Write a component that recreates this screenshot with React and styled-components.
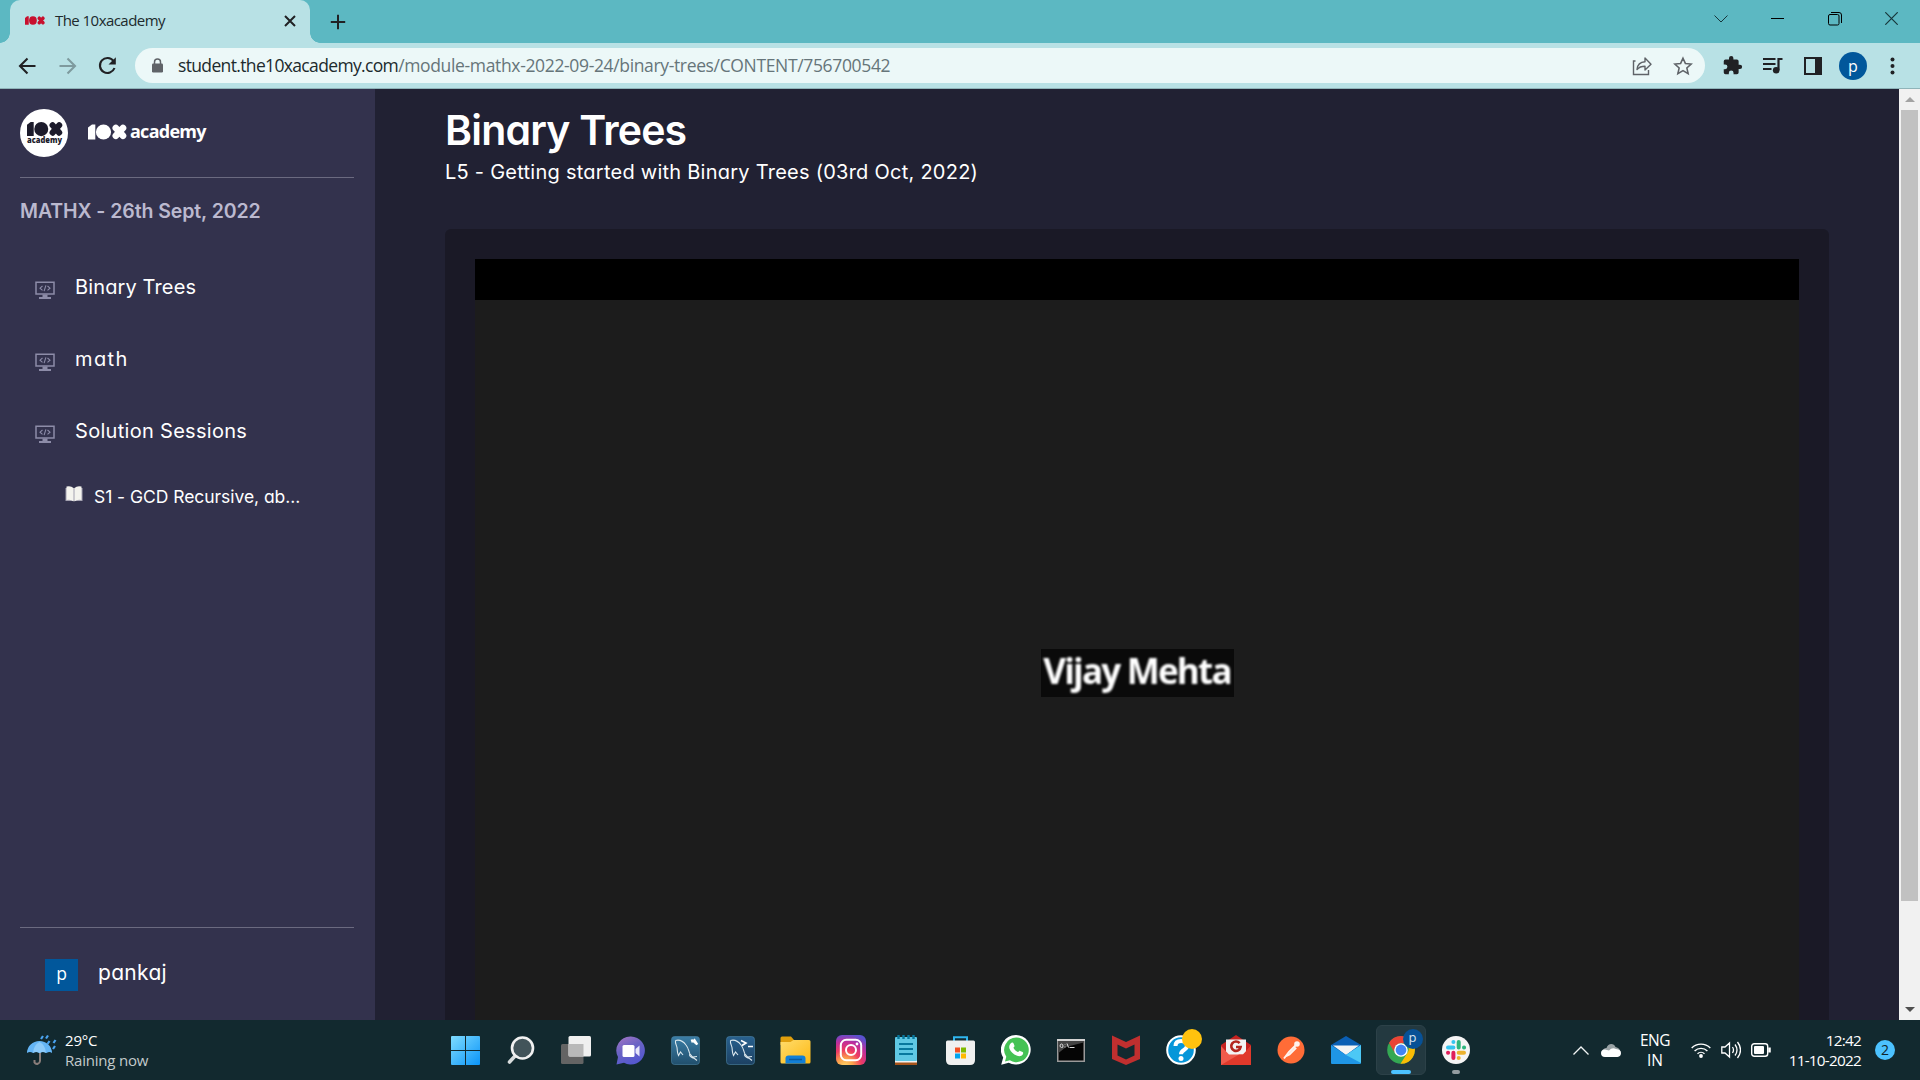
import React from "react";
import styled, { createGlobalStyle } from "styled-components";

const ui = `"Open Sans", "Noto Sans", sans-serif`;
const geo = `Inter, "Open Sans", sans-serif`;

const Global = createGlobalStyle`
  * { box-sizing: border-box; }
  body { margin: 0; overflow: hidden; background: #212133; }
  svg { flex: none; }
`;

const Screen = styled.div`
  width: 1920px;
  height: 1080px;
  display: flex;
  flex-direction: column;
  overflow: hidden;
`;

const Label = styled.span`
  display: block;
  white-space: nowrap;
  font-family: ${(p) => (p.$geo ? geo : ui)};
  font-feature-settings: ${(p) => (p.$geo ? '"cv11"' : "normal")};
  font-size: ${(p) => p.$size}px;
  line-height: ${(p) => p.$line || 24}px;
  font-weight: ${(p) => p.$weight || 400};
  letter-spacing: ${(p) => p.$track || 0}px;
  color: ${(p) => p.$color || "#fff"};
`;

/* ---------- browser chrome ---------- */
const TabStrip = styled.div`
  flex: none;
  height: 43px;
  background: #5cb8c2;
  display: flex;
  padding-left: 10px;
`;
const Tab = styled.div`
  width: 300px;
  height: 43px;
  background: #b8e1e5;
  border-radius: 10px 10px 0 0;
  display: flex;
  align-items: center;
  padding: 0 12px 2px 15px;
  position: relative;
  &::before, &::after {
    content: "";
    position: absolute;
    bottom: 0;
    width: 10px;
    height: 10px;
  }
  &::before {
    left: -10px;
    background: radial-gradient(circle at 0 0, transparent 9.5px, #b8e1e5 10px);
  }
  &::after {
    right: -10px;
    background: radial-gradient(circle at 100% 0, transparent 9.5px, #b8e1e5 10px);
  }
`;
const TabTitle = styled(Label)`
  margin: -2px 0 0 10px;
  flex: 1;
`;
const NewTab = styled.div`
  width: 55px;
  display: flex;
  align-items: center;
  justify-content: center;
`;
const WindowButtons = styled.div`
  margin-left: auto;
  display: flex;
  height: 37px;
  align-items: center;
`;
const WindowButton = styled.div`
  width: 57px;
  display: flex;
  justify-content: center;
`;
const Toolbar = styled.div`
  flex: none;
  height: 46px;
  background: #b8e1e5;
  border-bottom: 1px solid #8fb4b9;
  display: flex;
  align-items: center;
`;
const NavButtons = styled.div`
  width: 135px;
  padding-left: 17px;
  display: flex;
  gap: 20px;
`;
const AddressBar = styled.div`
  width: 1570px;
  height: 35px;
  border-radius: 18px;
  background: #ecf8f8;
  display: flex;
  align-items: center;
  padding: 0 11px 0 16px;
`;
const Url = styled(Label)`
  flex: 1;
  margin-left: 14px;
  margin-top: -1px;
  b { font-weight: 400; color: #202a2d; letter-spacing: -0.65px; }
`;
const BarIcons = styled.div`
  display: flex;
  gap: 17px;
`;
const Extensions = styled.div`
  display: flex;
  align-items: center;
  padding-left: 17px;
`;
const ExtensionSlot = styled.div`
  width: ${(p) => p.$w || 40}px;
  display: flex;
  justify-content: center;
`;
const Profile = styled.div`
  width: 28px;
  height: 28px;
  border-radius: 50%;
  background: #01579b;
  display: flex;
  align-items: center;
  justify-content: center;
`;

/* ---------- page ---------- */
const Page = styled.div`
  flex: none;
  height: 931px;
  display: flex;
  overflow: hidden;
`;
const Sidebar = styled.aside`
  width: 375px;
  height: 931px;
  background: #33324d;
  padding: 20px 21px 0 20px;
  display: flex;
  flex-direction: column;
`;
const Brand = styled.div`
  height: 68px;
  display: flex;
  align-items: flex-start;
`;
const Wordmark = styled.div`
  margin: 10px 0 0 19px;
  display: flex;
  align-items: flex-start;
  gap: 3px;
  svg { margin-top: 5px; }
`;
const Rule = styled.hr`
  width: 334px;
  height: 1px;
  border: 0;
  margin: 0;
  flex: none;
  background: #6b6a80;
`;
const Course = styled(Label)`
  margin-top: 19px;
`;
const Modules = styled.nav`
  margin-top: 47px;
  flex: 1;
`;
const ModuleRow = styled.div`
  height: 72px;
  display: flex;
  align-items: flex-start;
  padding-left: 15px;
  gap: 20px;
  svg { margin-top: 9px; }
`;
const LessonRow = styled.div`
  display: flex;
  margin-top: -3px;
  padding-left: 45px;
  gap: 11px;
  svg { margin-top: 1px; }
`;
const User = styled.div`
  height: 92px;
  display: flex;
  padding: 31px 0 0 25px;
  gap: 20px;
`;
const UserBadge = styled.div`
  width: 33px;
  height: 32px;
  background: #01579b;
  display: flex;
  justify-content: center;
`;
const Main = styled.main`
  width: 1524px;
  background: #212133;
  padding: 16px 70px 0;
`;
const Title = styled(Label).attrs({ as: "h1" })`
  margin: 0;
`;
const Subtitle = styled(Label)`
  margin-top: 2px;
`;
const Player = styled.section`
  margin-top: 42px;
  height: 900px;
  border-radius: 6px 6px 0 0;
  background: #1a1926;
  padding: 30px 30px 0;
`;
const Video = styled.div`
  height: 870px;
  border-top: 41px solid #000;
  background: #1c1c1c;
  display: flex;
  justify-content: center;
  align-items: flex-start;
  padding-top: 349px;
`;
const Speaker = styled.div`
  width: 193px;
  height: 48px;
  background: #0a0a0a;
  display: flex;
  justify-content: center;
`;
const SpeakerName = styled(Label)`
  filter: blur(0.8px);
`;
const Scrollbar = styled.div`
  width: 21px;
  background: #f1f1f1;
  display: flex;
  flex-direction: column;
  align-items: center;
  justify-content: space-between;
`;
const Arrow = styled.div`
  height: 21px;
  display: flex;
  align-items: center;
`;
const Thumb = styled.div`
  width: 17px;
  height: 791px;
  margin-bottom: auto;
  background: #c1c1c1;
`;

/* ---------- taskbar ---------- */
const Taskbar = styled.footer`
  flex: none;
  height: 60px;
  background: #12292f;
  display: flex;
`;
const Weather = styled.div`
  width: 438px;
  padding: 9px 0 0 26px;
  display: flex;
  gap: 8px;
  svg { margin-top: 5px; }
`;
const Apps = styled.div`
  display: flex;
  align-items: center;
  flex: 1;
`;
const AppSlot = styled.div`
  width: 55.04px;
  height: 60px;
  flex: none;
  display: flex;
  align-items: center;
  justify-content: center;
  position: relative;
`;
const ActiveTile = styled.div`
  width: 50px;
  height: 50px;
  border-radius: 6px;
  background: #233940;
  border: 1px solid #2c4148;
  display: flex;
  align-items: center;
  justify-content: center;
`;
const Running = styled.i`
  position: absolute;
  bottom: 6px;
  width: ${(p) => p.$w}px;
  height: 4px;
  border-radius: 2px;
  background: ${(p) => p.$c};
`;
const AppBadge = styled.div`
  position: absolute;
  top: 9px;
  right: 6px;
  width: 20px;
  height: 20px;
  border-radius: 50%;
  background: ${(p) => p.$c};
  display: flex;
  justify-content: center;
`;
const Tray = styled.div`
  display: flex;
  align-items: center;
  width: 347px;
`;
const TrayIcons = styled.div`
  display: flex;
  align-items: center;
  gap: ${(p) => p.$gap}px;
`;
const Language = styled.div`
  width: 60px;
  margin-left: 4px;
  margin-right: 6px;
  text-align: center;
`;
const Clock = styled.div`
  margin-left: auto;
  text-align: right;
`;
const Notice = styled.div`
  width: 20px;
  height: 20px;
  border-radius: 50%;
  background: #4cc2ff;
  margin: 0 25px 0 14px;
  display: flex;
  justify-content: center;
`;

/* ---------- drawings ---------- */
const Svg = ({ w, h = w, vb, children, ...rest }) => (
  <svg width={w} height={h} viewBox={vb || `0 0 ${w} ${h}`} fill="none" {...rest}>
    {children}
  </svg>
);

/* The 10x mark on a 39 x 16 grid: block, disc and cross. */
const TenX = ({ fill }) => (
  <g>
    <path d="M0 3.5 4 .5H7.300V15.500H0Z" fill={fill} />
    <circle cx="15.500" cy="8" r="7.600" fill={fill} />
    <path d="M27.800 4 35 11.800M35 4 27.800 11.800" stroke={fill} strokeWidth="6.600" strokeLinecap="round" />
  </g>
);

const Monitor = () => (
  <Svg w={20} h={19}>
    <path d="M1 1.2H19V13H1Z" stroke="#8d8ca8" strokeWidth="1.500" />
    <path d="M7.500 13.500h5v2.500h3.500V18H4v-2h3.500Z" fill="#8d8ca8" />
    <path d="M7.500 5 5 7.200l2.500 2.200M12.500 5 15 7.200l-2.500 2.200M10.900 4.300 9.100 10.200" stroke="#8d8ca8" strokeWidth="1.100" />
  </Svg>
);

const Dolphin = ({ top, bottom, id, children }) => (
  <Svg w={29}>
    <defs>
      <linearGradient id={id} x1="0" y1="0" x2="0" y2="1">
        <stop stopColor={top} /><stop offset="1" stopColor={bottom} />
      </linearGradient>
    </defs>
    <rect x=".5" y=".5" width="28" height="28" rx="3" fill={`url(#${id})`} stroke="#4b83a5" strokeOpacity=".6" />
    <path d="M4.500 4.500C8 3.500 12 5 15 9c2.500 3 2.500 6 4 9 1.500 2.500 4 4 7 6.500M4.500 4.500c-.5 3 1 4.500 1.500 7 .5 3 0 5 1.500 8l2-3.500 2.500 3M19 18c-1.500 1.500 1.500 4 4.500 4.500M22 21l4-.5" stroke="#dce8ee" strokeWidth="1.100" />
    {children}
  </Svg>
);

const apps = [
  ["start", <Svg w={29}>
    <defs><linearGradient id="win" x1="0" y1="0" x2="1" y2="1"><stop stopColor="#7fdcff" /><stop offset="1" stopColor="#0a94f8" /></linearGradient></defs>
    <path d="M0 1q0-1 1-1H14V14H0ZM15 0h13q1 0 1 1V14H15ZM0 15H14V29H1q-1 0-1-1ZM15 15H29v13q0 1-1 1H15Z" fill="url(#win)" />
  </Svg>],
  ["search", <Svg w={28}>
    <path d="M8.500 19.500 2.500 26" stroke="#d8dcdd" strokeWidth="3.600" strokeLinecap="round" />
    <circle cx="15.500" cy="12" r="10.500" fill="#42545a" stroke="#f1f1f1" strokeWidth="2.600" />
  </Svg>],
  ["tasks", <Svg w={30} h={28}>
    <rect x="0" y="8" width="22.500" height="20" rx="1.500" fill="#646464" />
    <rect x="7.500" y="0" width="22.500" height="20.500" rx="1.500" fill="#f0f0f0" />
    <path d="M7.500 8h15v12.500h-14q-1 0-1-1Z" fill="#b9b9b9" />
  </Svg>],
  ["meet", <Svg w={29}>
    <defs><linearGradient id="chat" x1="0" y1="0" x2=".5" y2="1"><stop stopColor="#a876c5" /><stop offset=".5" stopColor="#6a63c4" /><stop offset="1" stopColor="#5558cf" /></linearGradient></defs>
    <path d="M15 .5a14 14 0 1 1-7 26.200L.5 28.500 2 21A14 14 0 0 1 15 .5Z" fill="url(#chat)" />
    <rect x="6.500" y="9" width="12" height="12" rx="1.500" fill="#fff" />
    <path d="M19.500 13 23.500 9.500v11l-4-3.500Z" fill="#e6e6fa" />
  </Svg>],
  ["sql1", <Dolphin top="#3b7ea6" bottom="#214f6d" id="sea1">
    <path d="m21 4 5 4.500M20.500 3.500l1 3M23 3l3.500 5.500" stroke="#fff" strokeWidth="1.800" />
  </Dolphin>],
  ["sql2", <Dolphin top="#28618f" bottom="#1d4162" id="sea2">
    <path d="M15 4.500 20 7l-4 2.500M22 10.500h5" stroke="#fff" strokeWidth="1.600" />
  </Dolphin>],
  ["files", <Svg w={31} h={28}>
    <defs><linearGradient id="folder" x1="0" y1="0" x2="1" y2="1"><stop stopColor="#ffdc6c" /><stop offset="1" stopColor="#fdb913" /></linearGradient></defs>
    <path d="M.5 2q0-1.500 1.500-1.500h9L14 4v5H.5Z" fill="#e09f0d" />
    <path d="M.5 6h10l3-2H29q1.500 0 1.500 1.500V26q0 1.500-1.500 1.500H2Q.5 27.500.5 26Z" fill="url(#folder)" />
    <path d="M5.500 27.500v-5q0-3 3-3h14q3 0 3 3v5Z" fill="#127fd6" />
    <path d="M9 23.500h13" stroke="#0b5a9f" strokeWidth="1.500" />
  </Svg>],
  ["insta", <Svg w={30}>
    <defs>
      <radialGradient id="ig" cx=".3" cy="1.050" r="1.100"><stop stopColor="#ffd86b" /><stop offset=".25" stopColor="#fba14b" /><stop offset=".5" stopColor="#ee3c62" /><stop offset=".75" stopColor="#c02d9b" /><stop offset="1" stopColor="#5a52d0" /></radialGradient>
    </defs>
    <rect width="30" height="30" rx="6" fill="url(#ig)" />
    <rect x="4.800" y="4.800" width="20.400" height="20.400" rx="5.500" stroke="#fff" strokeWidth="2" />
    <circle cx="15" cy="15" r="5" stroke="#fff" strokeWidth="2" /><circle cx="21" cy="9" r="1.400" fill="#fff" />
  </Svg>],
  ["notepad", <Svg w={22} h={30}>
    <rect x="0" y="27" width="22" height="3" fill="#a6541b" /><rect x="0" y="25" width="22" height="2.500" fill="#f0f0f0" />
    <rect x="0" y="2" width="22" height="24" rx="1" fill="#5fc8e4" />
    <path d="M3.500 0v4M8.500 0v4M13.500 0v4M18.500 0v4" stroke="#08789e" strokeWidth="2.400" />
    <path d="M4 9h14M4 14h14M4 19h14" stroke="#08789e" strokeWidth="2" />
  </Svg>],
  ["store", <Svg w={29}>
    <path d="M8 7V1.200H21V7" stroke="#2fb6ef" strokeWidth="2" />
    <path d="M0 6q0-1.500 1.500-1.500h26Q29 4.500 29 6V24q0 5-5 5H5q-5 0-5-5Z" fill="#f0f0f0" />
    <path d="M9 11.500h5v5H9Z" fill="#f25022" /><path d="M15 11.500h5v5h-5Z" fill="#7fba00" /><path d="M9 17.500h5v5H9Z" fill="#00a4ef" /><path d="M15 17.500h5v5h-5Z" fill="#ffb900" />
  </Svg>],
  ["whatsapp", <Svg w={30}>
    <path d="M15 0a15 14.700 0 1 1-7.300 27.700L.2 29.700 2.200 22.400A15 14.700 0 0 1 15 0Z" fill="#fff" />
    <path d="M15.200 2.600a12.300 12.300 0 1 1-6.300 22.700L4 26.500l1.300-4.700A12.300 12.300 0 0 1 15.200 2.600Z" fill="#45c254" />
    <path d="M10.500 7.800c1-.7 1.700-.3 2.100.7l.8 2c.3.900-.1 1.200-1 2.300.9 2 2.500 3.400 4.800 4.300.8-.8 1.100-1.500 1.900-1.200l2.500 1.200c.8.500.7 1.400.1 2.400-1 1.600-3.400 2.100-5.600 1.200-4-1.500-6.300-3.900-7.600-7-.8-2.300.3-4.800 2-5.900Z" fill="#fff" />
  </Svg>],
  ["terminal", <Svg w={28} h={23}>
    <rect x=".75" y=".75" width="26.500" height="21.500" fill="#050505" stroke="#9a9a9a" strokeWidth="1.500" />
    <path d="M1.500 1.500h25v2L9 8 1.500 14Z" fill="#444" /><path d="M0 1h28" stroke="#d4d4d4" strokeWidth="2" />
    <path d="M3 7q0-2 1.500-2T6 7 4.500 8.500 3 7ZM8 5.500v.5M8 7.500v1M10 4.500l1.500 4M12.500 8.500h5" stroke="#ddd" strokeWidth="1" />
  </Svg>],
  ["shield", <Svg w={28} h={30}>
    <path d="M0 .5 14 7 28 .5V24L14 30 0 24Z" fill="#c02f2f" /><path d="M5.500 9.500 14 13.500 22.500 9.500V20.500L14 24.500 5.500 20.500Z" fill="#12292f" />
  </Svg>],
  ["help", <><Svg w={30}>
    <circle cx="15" cy="15" r="13.800" fill="#0696d9" stroke="#fff" strokeWidth="2" />
    <path d="M9.500 11q0-5 5.500-5 6 0 6 4.800c0 4.700-6 3.700-6 8.400" stroke="#fff" strokeWidth="4" /><circle cx="15" cy="23.500" r="2.500" fill="#fff" />
  </Svg><AppBadge $c="#ffc20e" /></>],
  ["gmail", <Svg w={30}>
    <path d="M0 10 15 0 30 10V30H0Z" fill="#c5221f" /><path d="M5 4.500h20v18H5Z" fill="#f3f3f3" />
    <path d="m0 11 8 8.500h14L30 11v19H0Z" fill="#ef5b4c" /><path d="M0 30 18 19.500h4L30 11v19Z" fill="#e0392b" />
    <path d="M18.600 8.200A4.700 4.700 0 1 0 19.600 12H15" stroke="#b3261e" strokeWidth="2.600" />
  </Svg>],
  ["postman", <Svg w={28}>
    <circle cx="14" cy="14" r="13.500" fill="#ff6c37" />
    <circle cx="20" cy="8" r="2.800" fill="#fff3ee" /><path d="M18.500 9.500 12 16l-5 6.500M17 11l1.500 1.500-6 6-4 2" stroke="#fff3ee" strokeWidth="1.900" />
  </Svg>],
  ["mail", <Svg w={30} h={28}>
    <path d="M0 9 15 0 30 9V20H0Z" fill="#0a5fb4" /><path d="M2 9.500H28L15 19Z" fill="#f4f4f4" />
    <path d="M0 9 15 19 30 9V27q0 1-1 1H1q-1 0-1-1Z" fill="#1f96e6" /><path d="M15 19 30 9V27Z" fill="#4cc8f5" />
  </Svg>],
  ["chrome", <><ActiveTile><Svg w={28}>
    <circle cx="14" cy="14" r="13.800" fill="#34a853" />
    <path d="M2 7A13.800 13.800 0 0 1 26 7.200H14a7 7 0 0 0-6 10Z" fill="#ea4335" />
    <path d="M26 7.200A13.800 13.800 0 0 1 13.500 27.800L20 17.500a7 7 0 0 0-1-10.300Z" fill="#fbbc04" />
    <circle cx="14" cy="14" r="6.800" fill="#fff" /><circle cx="14" cy="14" r="5.400" fill="#4285f4" />
  </Svg></ActiveTile><AppBadge $c="#075196"><Label $size={13} $line={17} $color="#d7e5f0">p</Label></AppBadge><Running $w={20} $c="#4cc2ff" /></>],
  ["slack", <><Svg w={28}>
    <circle cx="14" cy="14" r="14" fill="#f5f5f5" />
    <g strokeWidth="4" strokeLinecap="round">
      <path d="M11.400 6v.1M6 11.400h5.400" stroke="#36c5f0" /><path d="M16.700 6v5.400M22 11.400h.1" stroke="#2eb67d" />
      <path d="M16.700 16.700H22M16.700 22v.1" stroke="#ecb22e" /><path d="M11.400 16.700V22M6 16.700h.1" stroke="#e01e5a" />
    </g>
  </Svg><Running $w={8} $c="#949ca0" /></>],
];

const modules = [
  ["Binary Trees", 0.13],
  ["math", 1.4],
  ["Solution Sessions", 0.3],
];

export default function App() {
  return (
    <Screen>
      <Global />
      <TabStrip>
        <Tab>
          <Svg w={20} h={9} vb="0 0 39 16" preserveAspectRatio="none"><TenX fill="#c8102e" /></Svg>
          <TabTitle $size={15} $track={-0.55} $color="#202a2d">The 10xacademy</TabTitle>
          <Svg w={16}><path d="M3 3 13 13M13 3 3 13" stroke="#202124" strokeWidth="2" /></Svg>
        </Tab>
        <NewTab><Svg w={16}><path d="M8 .8V15.200M.8 8H15.200" stroke="#202124" strokeWidth="2" /></Svg></NewTab>
        <WindowButtons>
          <WindowButton><Svg w={14} h={8}><path d="M.5.5 7 7 13.500.5" stroke="#17363a" /></Svg></WindowButton>
          <WindowButton><Svg w={13} h={1}><path d="M0 .5H13" stroke="#000" /></Svg></WindowButton>
          <WindowButton><Svg w={14}><rect x=".5" y="2.500" width="10.500" height="10.500" rx="1.500" stroke="#000" /><path d="M3 .5h8q2.500 0 2.500 2.500v8" stroke="#000" /></Svg></WindowButton>
          <WindowButton><Svg w={13}><path d="M.3.3 12.700 12.700M12.700.3.3 12.700" stroke="#17363a" strokeWidth="1.200" /></Svg></WindowButton>
        </WindowButtons>
      </TabStrip>
      <Toolbar>
        <NavButtons>
          <Svg w={20}><path d="M18.500 10H3.500M10.500 2.500 3 10l7.500 7.500" stroke="#202124" strokeWidth="2.100" /></Svg>
          <Svg w={20}><path d="M2.500 10H17.500M10.500 2.500 18 10l-7.500 7.500" stroke="#7e9a9e" strokeWidth="2.100" /></Svg>
          <Svg w={20}><path d="M16.500 5A7.500 7.500 0 1 0 17.500 12" stroke="#202124" strokeWidth="2.100" /><path d="M18.800 1.200V8.500H11.500Z" fill="#202124" /></Svg>
        </NavButtons>
        <AddressBar>
          <Svg w={13} h={15}><rect x="1" y="5.500" width="11" height="9" rx="1.200" fill="#5f6368" /><path d="M3.500 6V4a3 3 0 0 1 6 0V6" stroke="#5f6368" strokeWidth="1.500" /></Svg>
          <Url $size={17.5} $track={-0.35} $color="#66757a"><b>student.the10xacademy.com</b>/module-mathx-2022-09-24/binary-trees/CONTENT/756700542</Url>
          <BarIcons>
            <Svg w={24} h={22}><path d="M4.500 6H2.500V19.500H17.500V15" stroke="#5f6368" strokeWidth="1.400" /><path d="M6 14.500C6.500 9.500 9.500 7 14 6.800V3L20 9.200 14 15V11.300C10.500 11.300 8 12.200 6 14.500Z" stroke="#5f6368" strokeWidth="1.400" strokeLinejoin="round" /></Svg>
            <Svg w={22} vb="0 0 24 24"><path d="m12 3.500 2.600 5.700 6.300.7-4.700 4.200 1.400 6.200L12 17.100l-5.600 3.200 1.400-6.200L3.100 9.900l6.300-.7Z" stroke="#5f6368" strokeWidth="1.700" /></Svg>
          </BarIcons>
        </AddressBar>
        <Extensions>
          <ExtensionSlot $w={21}><Svg w={21} vb="0 0 24 24"><path d="M20.500 11H19V7a2 2 0 0 0-2-2h-4V3.500a2.500 2.500 0 0 0-5 0V5H4a2 2 0 0 0-2 2v3.800h1.500a2.700 2.700 0 0 1 0 5.400H2V20a2 2 0 0 0 2 2h3.800v-1.500a2.700 2.700 0 0 1 5.400 0V22H17a2 2 0 0 0 2-2v-4h1.500a2.500 2.500 0 0 0 0-5Z" fill="#202124" /></Svg></ExtensionSlot>
          <ExtensionSlot $w={60}><Svg w={20} h={18}><path d="M0 2H12.500M0 7H12.500M0 12H8.500" stroke="#202124" strokeWidth="1.900" /><path d="M15.500 13V2H19.500" stroke="#202124" strokeWidth="2.200" /><circle cx="13.200" cy="13.200" r="3.300" fill="#202124" /></Svg></ExtensionSlot>
          <ExtensionSlot $w={20}><Svg w={18}><path d="M1 1H17V17H1Z" stroke="#202124" strokeWidth="2" /><path d="M11 1h6v16h-6Z" fill="#202124" /></Svg></ExtensionSlot>
          <ExtensionSlot $w={60}><Profile><Label $size={16} $line={22}>p</Label></Profile></ExtensionSlot>
          <ExtensionSlot $w={19}><Svg w={5} h={18}><circle cx="2.500" cy="2.500" r="2" fill="#202124" /><circle cx="2.500" cy="9" r="2" fill="#202124" /><circle cx="2.500" cy="15.500" r="2" fill="#202124" /></Svg></ExtensionSlot>
        </Extensions>
      </Toolbar>

      <Page>
        <Sidebar>
          <Brand>
            <Svg w={49} h={48}>
              <circle cx="24" cy="24" r="24" fill="#fff" />
              <g transform="translate(7 12.500) scale(.92 .94)"><TenX fill="#1c1b2b" /></g>
              <text x="24.500" y="34" textAnchor="middle" textLength="35" lengthAdjust="spacingAndGlyphs" fontFamily="Open Sans" fontWeight="800" fontSize="9" fill="#1c1b2b">academy</text>
            </Svg>
            <Wordmark>
              <Svg w={39} h={16}><TenX fill="#fff" /></Svg>
              <Label $size={18} $line={24} $weight={700} $track={-0.75}>academy</Label>
            </Wordmark>
          </Brand>
          <Rule />
          <Course $geo $size={19.5} $line={28} $weight={600} $track={-0.08} $color="#bbb9cf">MATHX - 26th Sept, 2022</Course>
          <Modules>
            {modules.map(([name, track]) => (
              <ModuleRow key={name}><Monitor /><Label $geo $size={20} $line={30} $track={track}>{name}</Label></ModuleRow>
            ))}
            <LessonRow>
              <Svg w={18} h={17}>
                <path d="M.5 2H17.500V15H.5Z" fill="#a3a1b0" /><path d="M1.500.5Q6-.5 8.500 2V15.500Q6 13 1.500 14ZM16.500.5Q12-.5 9.500 2V15.500Q12 13 16.500 14Z" fill="#f4f3ee" />
              </Svg>
              <Label $geo $size={17.5} $line={24} $track={-0.05}>S1 - GCD Recursive, ab...</Label>
            </LessonRow>
          </Modules>
          <Rule />
          <User>
            <UserBadge><Label $size={17.5} $line={29}>p</Label></UserBadge>
            <Label $geo $size={21} $line={28} $track={0.3}>pankaj</Label>
          </User>
        </Sidebar>
        <Main>
          <Title $geo $size={41} $line={50} $weight={600} $track={-0.8}>Binary Trees</Title>
          <Subtitle $geo $size={20} $line={30} $track={0.25}>L5 - Getting started with Binary Trees (03rd Oct, 2022)</Subtitle>
          <Player>
            <Video><Speaker><SpeakerName $size={35} $line={44} $weight={700} $track={-1.8}>Vijay Mehta</SpeakerName></Speaker></Video>
          </Player>
        </Main>
        <Scrollbar>
          <Arrow><Svg w={10} h={5}><path d="M0 5 5 0 10 5Z" fill="#a3a3a3" /></Svg></Arrow>
          <Thumb />
          <Arrow><Svg w={10} h={5}><path d="M0 0 5 5 10 0Z" fill="#505050" /></Svg></Arrow>
        </Scrollbar>
      </Page>

      <Taskbar>
        <Weather>
          <Svg w={31} h={32}>
            <path d="M14 17V27a3 3 0 0 1-5.500 1.500V26" stroke="#8a7d7a" strokeWidth="2" />
            <path d="M1 19A12.500 12 0 0 1 26 19Q23.500 17 20.500 19 17 17 13.500 19 10 17 7 19 4 17 1 19Z" fill="#64b5f6" /><path d="M13.500 8q-6 3-6.500 11 3-2 6.500 0 3.500-2 6.500 0Q19.500 11 13.500 8Z" fill="#8ccbfb" />
            <path d="m17 2-2 3M22 1.500l-2 3M23.500 7l-2 3M29.500 6l-2 3M29 12l-2 3" stroke="#4aa3f0" strokeWidth="2.200" />
          </Svg>
          <div>
            <Label $size={15} $line={22} $track={-0.2}>29°C</Label>
            <Label $size={15} $line={19} $track={-0.2} $color="#c3cacc">Raining now</Label>
          </div>
        </Weather>
        <Apps>{apps.map(([k, icon]) => <AppSlot key={k}>{icon}</AppSlot>)}</Apps>
        <Tray>
          <TrayIcons $gap={12}>
            <Svg w={16} h={9}><path d="M.5 8.500 8 1l7.500 7.500" stroke="#f2f5f5" strokeWidth="1.300" /></Svg>
            <Svg w={20} h={14}><path d="M1 9C1 6 4 5 5.500 5 7 0 13 0 14.500 4Q19 5 19.500 9Z" fill="#9aa2a5" /><path d="M0 10q0-3.500 4-3.500l4 1q3-3.500 7-1.500 5 .5 5 4T16.500 14H4Q0 14 0 10Z" fill="#fff" /></Svg>
          </TrayIcons>
          <Language><Label $size={15.5} $line={20} $track={-0.5}>ENG</Label><Label $size={15.5} $line={20}>IN</Label></Language>
          <TrayIcons $gap={10}>
            <Svg w={20} h={16}><path d="M.7 6a13 13 0 0 1 18.600 0M3.600 9a9 9 0 0 1 12.800 0M6.500 11.800a5 5 0 0 1 7 0" stroke="#fff" strokeWidth="1.400" /><circle cx="10" cy="14" r="1.900" fill="#fff" /></Svg>
            <Svg w={20} h={18}><path d="M.8 6H4L8.500 2V16L4 12H.8ZM11.500 6q2 3 0 6M14 3.500q4 5.500 0 11M16.500 1q6 8 0 16" stroke="#fff" strokeWidth="1.300" /></Svg>
            <Svg w={20} h={14}><rect x=".7" y=".7" width="16" height="12.600" rx="2.500" stroke="#fff" strokeWidth="1.400" /><rect x="3" y="3" width="10" height="8" rx="1" fill="#fff" /><path d="M18.500 4.500v5" stroke="#fff" strokeWidth="2.500" /></Svg>
          </TrayIcons>
          <Clock><Label $size={15.3} $line={20} $track={-0.75}>12:42</Label><Label $size={15.3} $line={20} $track={-0.75}>11-10-2022</Label></Clock>
          <Notice><Label $size={14} $line={20} $color="#10242b">2</Label></Notice>
        </Tray>
      </Taskbar>
    </Screen>
  );
}
